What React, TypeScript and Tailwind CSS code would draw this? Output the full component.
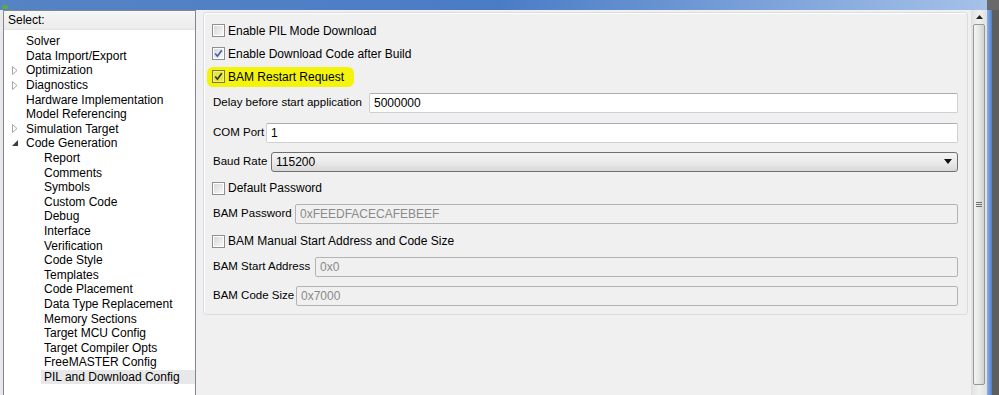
import React from "react"

type Node = { label: string; level: 0 | 1; exp?: "open" | "closed"; selected?: boolean }

const tree: Node[] = [
  { label: "Solver", level: 0 },
  { label: "Data Import/Export", level: 0 },
  { label: "Optimization", level: 0, exp: "closed" },
  { label: "Diagnostics", level: 0, exp: "closed" },
  { label: "Hardware Implementation", level: 0 },
  { label: "Model Referencing", level: 0 },
  { label: "Simulation Target", level: 0, exp: "closed" },
  { label: "Code Generation", level: 0, exp: "open" },
  { label: "Report", level: 1 },
  { label: "Comments", level: 1 },
  { label: "Symbols", level: 1 },
  { label: "Custom Code", level: 1 },
  { label: "Debug", level: 1 },
  { label: "Interface", level: 1 },
  { label: "Verification", level: 1 },
  { label: "Code Style", level: 1 },
  { label: "Templates", level: 1 },
  { label: "Code Placement", level: 1 },
  { label: "Data Type Replacement", level: 1 },
  { label: "Memory Sections", level: 1 },
  { label: "Target MCU Config", level: 1 },
  { label: "Target Compiler Opts", level: 1 },
  { label: "FreeMASTER Config", level: 1 },
  { label: "PIL and Download Config", level: 1, selected: true },
]

function Expander({ kind }: { kind: "open" | "closed" }) {
  if (kind === "closed") {
    return (
      <svg width="6" height="9" viewBox="0 0 6 9">
        <path d="M0.5 0.5 L5 4.5 L0.5 8.5 Z" fill="#fff" stroke="#a6a6a6" strokeWidth="1" />
      </svg>
    )
  }
  return (
    <svg width="6" height="6" viewBox="0 0 6 6">
      <path d="M6 0 L6 6 L0 6 Z" fill="#3c3c3c" />
    </svg>
  )
}

function TreeRow({ node }: { node: Node }) {
  if (node.level === 0) {
    return (
      <div className="flex items-center h-[14.6px] whitespace-nowrap">
        <div className="w-[22px] flex items-center pl-[8px]">{node.exp && <Expander kind={node.exp} />}</div>
        <span>{node.label}</span>
      </div>
    )
  }
  return (
    <div className="flex items-center h-[14.6px] whitespace-nowrap">
      <div className="w-[37px] shrink-0" />
      <span className={"flex-1 h-full flex items-center pl-[3px] " + (node.selected ? "bg-[#e8e8e8]" : "")}>
        {node.label}
      </span>
    </div>
  )
}

function CheckBox({ checked, tone = "blue", onYellow = false }: { checked?: boolean; tone?: "blue" | "dark"; onYellow?: boolean }) {
  return (
    <span
      className={
        "w-[13px] h-[13px] shrink-0 border p-[1px] flex " +
        (onYellow ? "border-[#7a7a40] bg-[#f4f46a]" : "border-[#8f8f8f] bg-white")
      }
    >
      <span
        className={
          "flex-1 flex items-center justify-center " +
          (onYellow ? "bg-[#e6e64a]" : "bg-gradient-to-br from-[#d6d8db] to-[#f8f8f8]")
        }
      >
        {checked && (
          <svg width="9" height="9" viewBox="0 0 9 9" className="-mt-[1px]">
            <path
              d="M1.2 4.6 L3.4 7.2 L7.8 1.2"
              fill="none"
              stroke={tone === "blue" ? "#3d5ea8" : "#2f3a12"}
              strokeWidth="1.6"
            />
          </svg>
        )}
      </span>
    </span>
  )
}

function TextField({ value, disabled }: { value: string; disabled?: boolean }) {
  return (
    <div
      className={
        "flex-1 h-[20px] flex items-center pl-[4px] rounded-[2px] border " +
        (disabled
          ? "bg-[#f0f0f0] border-[#b4b4b4] text-[#8a8a8a]"
          : "bg-white border-[#cdd0d4] border-t-[#abadb3] text-black")
      }
    >
      {value}
    </div>
  )
}

function Combo({ value }: { value: string }) {
  return (
    <div className="flex-1 h-[20px] flex items-center justify-between pl-[4px] pr-[5px] rounded-[3px] border border-[#707070] bg-gradient-to-b from-[#f3f3f3] via-[#ebebeb] to-[#d8d8d8]">
      <span>{value}</span>
      <svg width="8" height="5" viewBox="0 0 8 5">
        <path d="M0 0 L8 0 L4 5 Z" fill="#111" />
      </svg>
    </div>
  )
}

function Label({ w, children }: { w: string; children: React.ReactNode }) {
  return <span className={w + " shrink-0 pl-[1px] whitespace-nowrap text-[11.5px]"}>{children}</span>
}

export default function App() {
  return (
    <div className="w-[999px] h-[395px] flex flex-col bg-[#f0f0f0] overflow-hidden font-['Liberation_Sans',Arial,sans-serif] text-[12px] text-black">
      {/* window title bar, cut off */}
      <div className="h-[10px] shrink-0 flex bg-gradient-to-r from-[#5683c4] via-[#4a7cc6] to-[#a8c3e9]">
        <span className="w-[6px] h-[4px] mt-[5px] ml-[2px] bg-[#5aa84a] rounded-[1px]" />
        <div className="flex-1" />
        <div className="w-[12px] bg-[#6a6a6a]" />
      </div>

      <div className="flex flex-1 min-h-0">
        <div className="w-[3px] shrink-0 bg-[#e9e9e9]" />

        {/* left tree */}
        <div className="w-[193px] shrink-0 bg-white border border-b-0 border-[#828790] flex flex-col">
          <div className="h-[19px] flex items-center pl-[4px] bg-gradient-to-b from-[#f6f6f6] to-[#ececec] border-b border-[#e4e4e4]">
            Select:
          </div>
          <div className="pt-[4px] flex flex-col">
            {tree.map((n) => (
              <TreeRow key={n.label} node={n} />
            ))}
          </div>
        </div>

        {/* right pane */}
        <div className="w-[775px] shrink-0 pl-[7px] pt-[2px]">
          <div className="w-[765px] h-[303px] rounded-[3px] border border-[#d9dde0] shadow-[inset_1px_1px_0_#ffffff] pt-[6px] pb-[2px] pl-[8px] pr-[9px] flex flex-col">
            <div className="h-[23px] flex items-center gap-[3px]">
              <CheckBox />
              <span>Enable PIL Mode Download</span>
            </div>
            <div className="h-[23px] flex items-center gap-[3px]">
              <CheckBox checked />
              <span>Enable Download Code after Build</span>
            </div>
            <div className="h-[23px] flex items-center">
              <div className="-ml-[5px] h-[20px] flex items-center gap-[3px] pl-[5px] pr-[10px] rounded-[6px] bg-[#f3f30c]">
                <CheckBox checked tone="dark" onYellow />
                <span>BAM Restart Request</span>
              </div>
            </div>
            <div className="h-[30px] flex items-center">
              <Label w="w-[157px]">Delay before start application</Label>
              <TextField value="5000000" />
            </div>
            <div className="h-[29px] flex items-center">
              <Label w="w-[54px]">COM Port</Label>
              <TextField value="1" />
            </div>
            <div className="h-[29px] flex items-center">
              <Label w="w-[59px]">Baud Rate</Label>
              <Combo value="115200" />
            </div>
            <div className="h-[24px] flex items-center gap-[3px]">
              <CheckBox />
              <span>Default Password</span>
            </div>
            <div className="h-[28px] flex items-center">
              <Label w="w-[83px]">BAM Password</Label>
              <TextField value="0xFEEDFACECAFEBEEF" disabled />
            </div>
            <div className="h-[26px] flex items-center gap-[3px]">
              <CheckBox />
              <span>BAM Manual Start Address and Code Size</span>
            </div>
            <div className="h-[26px] flex items-center">
              <Label w="w-[103px]">BAM Start Address</Label>
              <TextField value="0x0" disabled />
            </div>
            <div className="h-[32px] flex items-center">
              <Label w="w-[84px]">BAM Code Size</Label>
              <TextField value="0x7000" disabled />
            </div>
          </div>
        </div>

        {/* scrollbar */}
        <div className="w-[16px] shrink-0 bg-gradient-to-r from-[#e3e3e3] via-[#f0f0f0] to-[#e3e3e3] border-x border-[#e0e0e0] flex flex-col">
          <div className="h-[14px] flex items-center justify-center">
            <svg width="7" height="4" viewBox="0 0 7 4">
              <path d="M0 4 L3.5 0 L7 4 Z" fill="#222" />
            </svg>
          </div>
          <div className="h-[361px] mx-px rounded-[2px] border border-[#979797] bg-gradient-to-r from-[#f4f4f4] via-[#e6e6e6] to-[#d2d2d2] flex items-center justify-center">
            <div className="flex flex-col gap-[1px]">
              <div className="w-[6px] h-px bg-[#6e6e6e]" />
              <div className="w-[6px] h-px bg-[#6e6e6e]" />
              <div className="w-[6px] h-px bg-[#6e6e6e]" />
            </div>
          </div>
        </div>

        <div className="w-[5px] shrink-0 bg-gradient-to-r from-[#8eb1e2] to-[#4d7fcb]" />
        <div className="w-[7px] shrink-0 bg-[#5e5e5e]" />
      </div>
    </div>
  )
}
